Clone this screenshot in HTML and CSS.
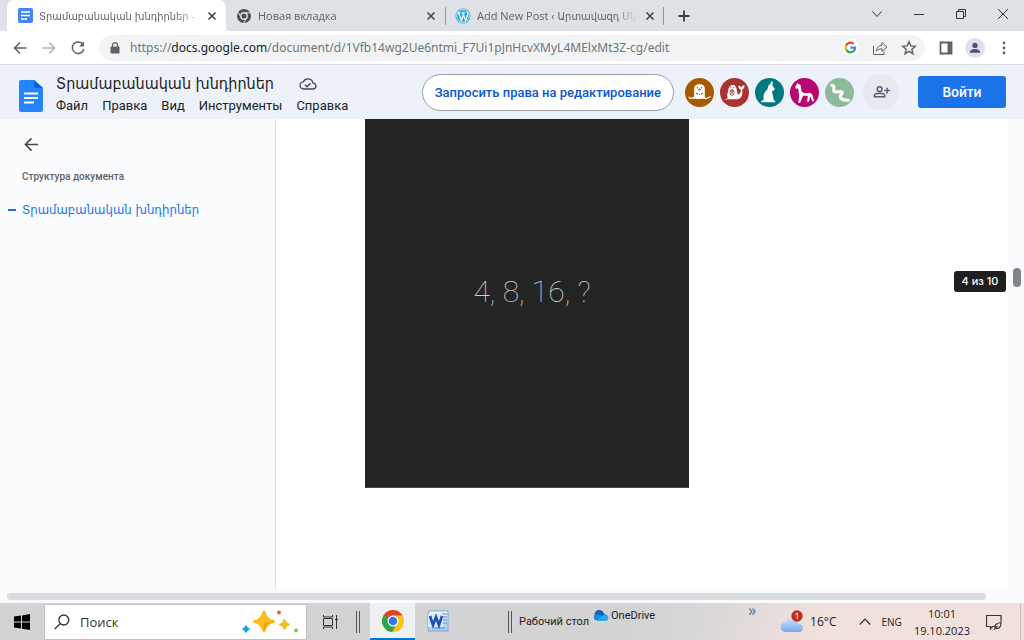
FILE: index.html
```html
<!DOCTYPE html>
<html lang="ru">
<head>
<meta charset="utf-8">
<meta name="viewport" content="width=device-width, initial-scale=1">
<title>Տրամաբանական խնդիրներ</title>
<link rel="stylesheet" href="styles.css">
</head>
<body>
<div class="screen">
  <div class="tabstrip">
    <div class="tab tab-active">
      <svg class="tab-icon" viewBox="0 0 16 16"><rect x="1" width="15" height="15" rx="2" fill="#4285f4"/><path d="M4 4h9M4 7.500h9M4 11h6" stroke="#fff" stroke-width="1.600"/></svg>
      <span class="tab-title">Տրամաբանական խնդիրներ -</span>
      <button class="tab-close" aria-label="Закрыть вкладку"><svg viewBox="0 0 10 10"><path d="M1.500 1.500l7 7M8.500 1.500l-7 7"/></svg></button>
    </div>
    <div class="tab">
      <svg class="tab-icon" viewBox="0 0 16 16"><circle cx="8" cy="8" r="7" fill="#4b4e52"/><circle cx="8" cy="8" r="3.200" fill="#4b4e52" stroke="#dee1e6" stroke-width="1.400"/><path d="M8 4.800h6.500M5.200 9.600L2 4.100M10.800 9.600L7.700 15" stroke="#dee1e6" stroke-width="1"/></svg>
      <span class="tab-title">Новая вкладка</span>
      <button class="tab-close" aria-label="Закрыть вкладку"><svg viewBox="0 0 10 10"><path d="M1.500 1.500l7 7M8.500 1.500l-7 7"/></svg></button>
    </div>
    <div class="tab tab-divided">
      <svg class="tab-icon" viewBox="0 0 16 16"><circle cx="8" cy="8" r="7.500" fill="#21a5dc"/><circle cx="8" cy="8" r="6.300" fill="none" stroke="#fff" stroke-width=".8"/><path d="M2.500 4.800h3M6.800 4.800h3.400M3.700 5l2.700 7.600L8.400 7M7.900 5l2.700 7.600L12.800 6c.3-1-.9-1.500-.6-2.700" fill="none" stroke="#fff" stroke-width="1.300"/></svg>
      <span class="tab-title">Add New Post ‹ Արտավազդ Մկր</span>
      <button class="tab-close" aria-label="Закрыть вкладку"><svg viewBox="0 0 10 10"><path d="M1.500 1.500l7 7M8.500 1.500l-7 7"/></svg></button>
    </div>
    <button class="new-tab" aria-label="Новая вкладка"><svg viewBox="0 0 12 12"><path d="M6 .5v11M.5 6h11"/></svg></button>
    <div class="window-controls">
      <button aria-label="Поиск вкладок"><svg viewBox="0 0 12 12"><path d="M1.500 3.500L6 8.500l4.500-5"/></svg></button>
      <button aria-label="Свернуть"><svg viewBox="0 0 12 12"><path d="M1 6.500h10"/></svg></button>
      <button aria-label="Восстановить"><svg viewBox="0 0 12 12"><path d="M1.500 3.500h7v7h-7zM3.500 3.500v-2h7v7h-2"/></svg></button>
      <button aria-label="Закрыть"><svg viewBox="0 0 12 12"><path d="M1 1l10 10M11 1L1 11"/></svg></button>
    </div>
  </div>

  <div class="toolbar">
    <div class="nav-buttons">
      <button aria-label="Назад"><svg viewBox="0 0 16 16"><path d="M14.500 8H2.500M8 2.500L2.500 8 8 13.500"/></svg></button>
      <button class="is-disabled" aria-label="Вперёд"><svg viewBox="0 0 16 16"><path d="M1.500 8h12M8 2.500L13.500 8 8 13.500"/></svg></button>
      <button aria-label="Обновить"><svg viewBox="0 0 16 16"><path d="M13 4.500a5.800 5.800 0 1 0 .8 4.500"/><path d="M14 1.500v5H9z" class="solid"/></svg></button>
    </div>
    <div class="omnibox">
      <svg class="lock" viewBox="0 0 10 12"><path d="M1 5h8v6H1z" fill="#5f6368" stroke="#5f6368"/><path d="M2.500 5V3.200a2.500 2.500 0 0 1 5 0V5" fill="none" stroke="#5f6368" stroke-width="1.300"/></svg>
      <a class="url" href="#">https://<span class="url-host">docs.google.com</span>/document/d/1Vfb14wg2Ue6ntmi_F7Ui1pJnHcvXMyL4MElxMt3Z-cg/edit</a>
      <button class="google-badge" aria-label="Google"><svg viewBox="0 0 48 48"><path fill="#4285f4" d="M45 24.500c0-1.600-.1-2.800-.4-4H24v7.700h12c-.3 2-1.600 5-4.500 7l6.900 5.400c4.200-3.800 6.600-9.500 6.600-16.100z"/><path fill="#34a853" d="M24 46c5.900 0 10.900-2 14.500-5.300l-6.900-5.400c-1.900 1.300-4.400 2.200-7.600 2.200-5.800 0-10.700-3.800-12.500-9.100l-7.100 5.500C8 41 15.400 46 24 46z"/><path fill="#fbbc05" d="M11.500 28.400a13.500 13.500 0 0 1 0-8.700l-7.100-5.600a22 22 0 0 0 0 19.800z"/><path fill="#ea4335" d="M24 10.600c4.100 0 6.900 1.800 8.500 3.300l6.100-6C34.900 4.300 29.900 2 24 2 15.400 2 8 7 4.400 14.100l7.100 5.600c1.800-5.300 6.700-9.100 12.500-9.100z"/></svg></button>
      <button aria-label="Поделиться"><svg class="thin" viewBox="0 0 16 16"><path d="M1.500 6v8.500h10.500v-3M4.500 11c.3-3.700 2.200-5.500 5.500-5.600V2.500L15 7l-5 4.500V8.800C7.800 8.800 6 9.300 4.500 11z"/></svg></button>
      <button aria-label="Добавить закладку"><svg viewBox="0 0 16 16"><path d="M8 1.800l1.800 4.100 4.500.4-3.400 3 1 4.400L8 11.400l-3.900 2.300 1-4.400-3.400-3 4.500-.4z"/></svg></button>
    </div>
    <div class="toolbar-actions">
      <button aria-label="Боковая панель"><svg viewBox="0 0 16 16"><path d="M2.500 2.500h11v11h-11z" stroke-width="1.800"/><path class="solid" d="M9.500 2h4v12h-4z"/></svg></button>
      <button class="profile" aria-label="Профиль"><svg viewBox="0 0 16 16"><circle class="solid" cx="8" cy="5" r="3"/><path class="solid" d="M2 13.500c0-3 2.500-4.300 6-4.300s6 1.300 6 4.300z"/></svg></button>
      <button aria-label="Меню"><svg viewBox="0 0 16 16"><circle class="solid" cx="8" cy="3" r="1.400"/><circle class="solid" cx="8" cy="8" r="1.400"/><circle class="solid" cx="8" cy="13" r="1.400"/></svg></button>
    </div>
  </div>

  <header class="docs-header">
    <svg class="docs-logo" viewBox="0 0 24 32"><path fill="#2684fc" d="M2 0h13l9 8v22a2 2 0 0 1-2 2H2a2 2 0 0 1-2-2V2a2 2 0 0 1 2-2z"/><path fill="#0066da" d="M15 0l9 8h-7a2 2 0 0 1-2-2z"/><path d="M5 13.500h14M5 18h14M5 22.500h10" stroke="#fff" stroke-width="1.900"/></svg>
    <div class="docs-heading">
      <div class="title-row">
        <h1>Տրամաբանական խնդիրներ</h1>
        <svg class="cloud" viewBox="0 0 18 14"><path d="M4.800 12a3.600 3.600 0 0 1-.4-7.200 5 5 0 0 1 9.400 1A3.100 3.100 0 0 1 13.800 12z"/><path d="M6 7.800l2 2 3.500-3.600"/></svg>
      </div>
      <nav class="menu">
        <button>Файл</button><button>Правка</button><button>Вид</button><button>Инструменты</button><button>Справка</button>
      </nav>
    </div>
    <button class="request">Запросить права на редактирование</button>
    <div class="avatars">
      <svg viewBox="0 0 30 30"><circle cx="15" cy="15" r="15" fill="#a65b00"/><path fill="#fff" d="M9.500 20V11.500C9.500 8 11 6.500 15 6.500s5.500 1.500 5.500 5V20l2 1.500H7.500z"/><path d="M4 19.500q1.500 2.500 4 1t4 0 4 0 4 0 4 0 2-1" stroke="#fff" fill="none" stroke-width="1.300"/><g fill="#a65b00"><circle cx="13" cy="10" r=".8"/><circle cx="17" cy="10" r=".8"/><ellipse cx="15" cy="12" rx="1.500" ry="1"/><path d="M11.500 15l2 1v1.200l-2-.7zM18.500 15l-2 1v1.200l2-.7zM14.500 16.500h1v1h-1z"/></g></svg>
      <svg viewBox="0 0 30 30"><circle cx="15" cy="15" r="15" fill="#a93331"/><path fill="#fff" d="M8 21c-1-3-.4-5 .4-7 0-9 9-9 9-1l1 4c2.500 0 3.500-2 3-5-2-1-3-3-2-4 1 0 2 .5 3 2 0-2 2-3 3-2 0 2-1 3-2.500 4 1 6-1 10-5.500 10H8l-4 1z"/><ellipse cx="12.500" cy="15" rx="2" ry="3" fill="none" stroke="#a93331"/><path stroke="#a93331" stroke-width="1.200" d="M10.500 10h1M14 10h1M12.500 12v4"/></svg>
      <svg viewBox="0 0 30 30"><circle cx="15" cy="15" r="15" fill="#00797e"/><path fill="#fff" d="M18.500 3.500L18 8l2.500 3-1 2-2 .5.500 2.500 1.500 7 1.500 1v1H7l-1-1 3-1.500c-1-5 1-8 4-11l1-4 2-1.500 1-3.500.5 2z"/></svg>
      <svg viewBox="0 0 30 30"><circle cx="15" cy="15" r="15" fill="#b80672"/><path fill="#fff" d="M5.500 8.500L7.500 6V4.500L8.500 6l2.500 1.500 1 6.500 2.500 1.500h6.500l2 1.500 2 7h-2l-2-5-1.500 5.500h-2l1-6-4.500-.5-1.500 2.500-2 5h-2l1-7-1-8-2.500 1z"/></svg>
      <svg viewBox="0 0 30 30"><circle cx="15" cy="15" r="15" fill="#8cba9b"/><path fill="none" stroke="#fff" stroke-width="3.200" stroke-linecap="round" stroke-linejoin="round" d="M7 7.500c3 0 2 2 2 5 0 4 7 0 8.500 2s-3.500 4-1 6.500c1.500 2 5 2 8 2"/></svg>
    </div>
    <button class="add-person" aria-label="Добавить пользователя"><svg viewBox="0 0 18 14"><circle cx="7" cy="4" r="2.500"/><path d="M1.500 12v-1.300C1.500 9 4 8.300 7 8.300s5.500.7 5.500 2.400V12zM15 2.500v6M12 5.500h6"/></svg></button>
    <button class="sign-in">Войти</button>
  </header>

  <main class="workspace">
    <aside class="outline">
      <button class="outline-back" aria-label="Закрыть структуру"><svg viewBox="0 0 16 16"><path d="M15 8H1.500M8 1.500L1.500 8 8 14.500"/></svg></button>
      <h2>Структура документа</h2>
      <a class="outline-item" href="#puzzle"><span class="dash"></span>Տրամաբանական խնդիրներ</a>
    </aside>
    <section class="document">
      <div class="puzzle" id="puzzle">4, 8, 16, ?</div>
      <div class="page-tip">4 из 10</div>
    </section>
    <div class="v-scroll"><div class="v-thumb"></div></div>
  </main>
  <div class="h-scroll"><div class="h-thumb"></div></div>

  <footer class="taskbar">
    <button class="start" aria-label="Пуск"><svg viewBox="0 0 16 16"><path d="M0 2.500l7-1v6H0zM8 1.400L16 0v7.500H8zM0 8.500h7v6l-7-1zM8 8.500h8V16l-8-1.300z"/></svg></button>
    <label class="search">
      <svg class="loupe" viewBox="0 0 16 16"><circle cx="9.800" cy="6" r="5"/><path d="M6.200 9.600L.8 15"/></svg>
      <input type="text" placeholder="Поиск" aria-label="Поиск">
      <svg class="sparkles" viewBox="0 0 58 24"><path fill="#f9bd20" stroke="#f9bd20" stroke-linejoin="round" d="M23 2q2 8 9.500 9.500Q25 13 23 21q-2-8-9.500-9.500Q21 10 23 2z" stroke-width="3"/><path fill="#e9a315" d="M23 21q2-8 9.500-9.500L23 13z"/><path fill="#f9bd20" stroke="#f9bd20" stroke-linejoin="round" stroke-width="2" d="M43.500 10q1 4 4.500 4.500-3.500.5-4.500 4.500-1-4-4.500-4.500 3.500-.5 4.500-4.500z"/><path fill="#10a5e6" stroke="#10a5e6" stroke-linejoin="round" d="M5 15.500q1 2.500 3.500 3.500Q6 20 5 22.500 4 20 1.500 19 4 18 5 15.500z"/><circle cx="38" cy="2.500" r="1.900" fill="#f1592a"/><circle cx="55" cy="20.500" r="2" fill="#8bc53f"/></svg>
    </label>
    <button class="task-view" aria-label="Представление задач"><svg viewBox="0 0 16 16"><path d="M1.500 4.500h9v7h-9zM1.500 1v2h9V1M1.500 15v-2h9v2M14.500 1v14M13 5.500h3"/></svg></button>
    <span class="grip grip-apps"></span>
    <button class="app app-active" aria-label="Google Chrome"><svg viewBox="0 0 24 24"><circle cx="12" cy="12" r="11" fill="#fbc116"/><path fill="#db4437" d="M12 12L2.500 6.500A11 11 0 0 1 21.500 6.500H12z"/><path fill="#2ca44e" d="M12 12l-9.500-5.500A11 11 0 0 0 11 23l5-8.500z"/><circle cx="12" cy="12" r="5.500" fill="#fff"/><circle cx="12" cy="12" r="4.300" fill="#3478e5"/></svg></button>
    <button class="app" aria-label="Word"><svg viewBox="0 0 24 24"><defs><linearGradient id="word" x2="0" y2="1"><stop stop-color="#f6fbff"/><stop offset="1" stop-color="#a8c9f1"/></linearGradient></defs><path fill="url(#word)" stroke="#7da6db" d="M3 2h19v20H2V6z"/><path stroke="#5682c8" d="M16 5h5M16 8h5M16 11h5M16 14h5M8 19h11"/><path fill="#d9e9fb" d="M2 5h15v13H2z"/><path d="M4 7l3 9 3-8 3 8 3-9" fill="none" stroke="#1c50ac" stroke-width="2.600"/></svg></button>
    <span class="grip grip-desktop"></span>
    <span class="desktop-label">Рабочий стол</span>
    <a class="onedrive" href="#"><svg viewBox="0 0 16 11"><path fill="#0c62b9" d="M2 7A4.800 4.800 0 0 1 10.500 2.500L13 6z"/><path fill="#1689d9" d="M2.500 10A3.200 3.200 0 0 1 4 4l7 2.500L9 10z"/><path fill="#28a8ea" d="M3 11l8-6.500a3.400 3.400 0 0 1 2 6.500z"/></svg>OneDrive</a>
    <button class="more" aria-label="Показать ещё">»</button>
    <div class="tray">
      <button class="weather"><svg viewBox="0 0 24 24"><defs><linearGradient id="sky" x2="0" y2="1"><stop stop-color="#c6dfff"/><stop offset="1" stop-color="#79aaf0"/></linearGradient></defs><path fill="url(#sky)" d="M6 22a5 5 0 0 1-.5-10 7 7 0 0 1 13 2 4 4 0 0 1 .5 8z"/><circle cx="17" cy="6" r="5.700" fill="#c42b1c"/><path d="M15.500 4.500L17.300 3v6" fill="none" stroke="#fff"/></svg>16°C</button>
      <button class="tray-up" aria-label="Скрытые значки"><svg viewBox="0 0 12 12"><path d="M.8 8.500L6 3l5.200 5.500"/></svg></button>
      <button class="lang">ENG</button>
      <button class="clock"><span>10:01</span><span>19.10.2023</span></button>
      <button class="notify" aria-label="Уведомления"><svg viewBox="0 0 16 16"><path d="M8.500 12.500H6.500L4.500 15v-2.500h-4v-11h14.500v6M9 13c-.5-2 2-4 6-4.500 0 3.500-1.500 6-4 6-1.500 0-2-.5-2-1.500zM8 15.500l3.500-3.500"/></svg></button>
    </div>
  </footer>
</div>
</body>
</html>
```
FILE: styles.css
```css
* { box-sizing: border-box; }
body { margin: 0; font-family: "Open Sans", "DejaVu Sans Condensed", "DejaVu Sans", sans-serif; color: #202124; }
button { margin: 0; padding: 0; border: 0; background: none; font: inherit; color: inherit; display: flex; align-items: center; justify-content: center; flex: none; }
a { color: inherit; text-decoration: none; }
svg { display: block; flex: none; }
h1, h2 { margin: 0; font-weight: 400; }
.screen { height: 100vh; display: flex; flex-direction: column; overflow: hidden; }

.tabstrip { flex: none; height: 31px; display: flex; align-items: stretch; background: #dee1e6; padding-left: 7px; }
.tab { flex: 0 1 219px; min-width: 0; display: flex; align-items: center; padding: 0 8px 0 10px; gap: 6px; color: #5f6368; font-size: 11px; }
.tab-active { background: #fff; border-radius: 7px 7px 0 0; }
.tab-divided { position: relative; }
.tab-divided::before, .tab-divided::after { content: ""; position: absolute; width: 1px; height: 18px; top: 7px; background: #94979c; }
.tab-divided::before { left: 0; }
.tab-divided::after { right: 0; }
.tab-icon { width: 16px; height: 16px; }
.tab-title { flex: 1; min-width: 0; overflow: hidden; white-space: nowrap; -webkit-mask-image: linear-gradient(to left, transparent, #000 24px); mask-image: linear-gradient(to left, transparent, #000 24px); }
.tab-close { width: 12px; height: 20px; }
.tab-close svg { width: 10px; height: 10px; fill: none; stroke: #3c4043; stroke-width: 1.5; }
.new-tab { width: 40px; }
.new-tab svg { width: 12px; height: 12px; stroke: #3c4043; stroke-width: 1.8; }
.window-controls { margin-left: auto; display: flex; padding-bottom: 4px; }
.window-controls button { width: 42px; }
.window-controls svg { width: 12px; height: 12px; fill: none; stroke: #333; stroke-width: 1; }

.toolbar { flex: none; height: 34px; display: flex; align-items: center; background: #fff; border-bottom: 1px solid #d8dade; padding-left: 5px; }
.toolbar button svg { width: 16px; height: 16px; fill: none; stroke: #5f6368; stroke-width: 1.5; }
.toolbar button .thin { stroke-width: 1; }
.toolbar .solid { fill: #5f6368; stroke: none; }
.nav-buttons { display: flex; width: 94px; }
.nav-buttons button { width: 29px; height: 28px; }
.nav-buttons .is-disabled { opacity: .5; }
.omnibox { flex: 1; min-width: 0; height: 26px; display: flex; align-items: center; background: #f1f3f4; border-radius: 13px; padding: 0 2px 0 11px; }
.lock { width: 10px; height: 12px; margin-right: 10px; }
.url { flex: 1; min-width: 0; overflow: hidden; white-space: nowrap; font-family: "Noto Sans", sans-serif; font-size: 12px; color: #70757a; }
.url-host { color: #202124; }
.omnibox button { width: 29px; height: 26px; }
.toolbar .google-badge svg { width: 17px; height: 17px; padding: 2px; border-radius: 50%; background: #fff; stroke: none; }
.toolbar-actions { display: flex; align-items: center; padding: 0 6px; }
.toolbar-actions button { width: 29px; height: 26px; }
.toolbar-actions .profile svg { width: 20px; height: 20px; padding: 3px; border-radius: 50%; background: #dee1e6; }
.toolbar-actions .profile .solid { fill: #4a5670; }

.docs-header { flex: none; height: 54px; display: flex; align-items: center; background: #edf2fa; padding: 0 18px 0 19px; font-family: Roboto, "DejaVu Sans", sans-serif; }
.docs-logo { width: 24px; height: 32px; margin: 7px 13px 0 0; }
.docs-heading { flex: 1; min-width: 0; align-self: stretch; padding-top: 7px; }
.title-row { display: flex; align-items: center; gap: 25px; height: 24px; white-space: nowrap; }
h1 { font-family: "DejaVu Sans Condensed", "DejaVu Sans", sans-serif; font-size: 16px; line-height: 24px; }
.cloud { width: 18px; height: 14px; fill: none; stroke: #444746; stroke-width: 1.3; }
.menu { display: flex; gap: 14px; height: 20px; font-size: 13px; line-height: 20px; }
.request { height: 37px; padding: 0 12px; border: 1px solid #9a9fa6; border-radius: 19px; background: #fff; color: #0b57d0; font-size: 13px; font-weight: 500; }
.avatars { display: flex; gap: 6px; margin: 0 9px 0 11px; }
.avatars svg { width: 29px; height: 29px; }
.add-person { width: 36px; height: 36px; border-radius: 50%; background: #e6e9ee; }
.add-person svg { width: 17px; height: 14px; fill: none; stroke: #536079; stroke-width: 1.6; }
.sign-in { width: 88px; height: 32px; margin-left: 19px; border-radius: 3px; background: #1a73e8; color: #fff; font-family: Inter, sans-serif; font-size: 13px; font-weight: 600; }

.workspace { flex: 1; min-height: 0; display: flex; background: #fff; }
.outline { width: 276px; flex: none; background: #f9fbfd; border-right: 1px solid #dcdfe3; padding: 17px 8px; }
.outline-back { width: 16px; height: 16px; margin: 0 0 16px 15px; }
.outline-back svg { width: 15px; height: 15px; fill: none; stroke: #444746; stroke-width: 1.7; }
.outline h2 { padding-left: 14px; font: 500 10px/18px Roboto, sans-serif; color: #5f6368; }
.outline-item { display: flex; align-items: center; gap: 6px; margin-top: 14px; font: 13px/20px "DejaVu Sans Condensed", "DejaVu Sans", sans-serif; color: #1a73e8; white-space: nowrap; }
.dash { width: 8px; height: 2px; background: #1a73e8; }
.document { flex: 1; min-width: 0; position: relative; display: flex; align-items: flex-start; padding-left: 89px; }
.puzzle { width: 324px; height: 369px; display: flex; align-items: center; justify-content: center; padding: 0 0 22px 10px; background: #242424; color: #d0d0d0; font: 100 30px/40px Roboto, sans-serif; border-bottom: 1px solid #454545; }
.page-tip { position: absolute; right: 3px; top: 152px; width: 52px; border-radius: 3px; background: #1f1f1f; color: #fff; font: 500 11px/21px Inter, sans-serif; text-align: center; }
.v-scroll { width: 15px; flex: none; background: #f9fbfd; padding: 149px 4px 0; }
.v-thumb { width: 8px; height: 19px; border-radius: 4px; background: #80848b; }
.h-scroll { flex: none; height: 14px; background: #f9fbfd; padding: 4px 38px 0 7px; }
.h-thumb { height: 7px; border-radius: 4px; background: #dadce0; }

.taskbar { flex: none; height: 37px; display: flex; align-items: center; background: linear-gradient(100deg, #d3d3d4 0 60%, #d9d7d7 68%, #f0e1dc 80%, #f0e1dc); font-size: 12px; white-space: nowrap; }
.taskbar svg { fill: none; stroke: #333; }
.start { width: 44px; height: 36px; }
.taskbar .start svg { width: 16px; height: 16px; fill: #000; stroke: none; }
.search { flex: 0 1 263px; min-width: 0; height: 36px; display: flex; align-items: center; background: #fff; border: 1px solid #c2c2c2; padding: 0 7px 0 9px; }
.loupe { width: 16px; height: 16px; stroke-width: 1.3; }
.search input { flex: 1; min-width: 0; border: 0; padding: 0 0 0 10px; background: none; font: inherit; font-size: 13px; outline: none; }
.search input::placeholder { color: #333; opacity: 1; }
.sparkles { width: 58px; height: 24px; }
.taskbar .sparkles { stroke: none; }
.task-view { width: 45px; }
.task-view svg { width: 16px; height: 16px; }
.grip { width: 4px; height: 22px; border: solid #555; border-width: 0 1px; flex: none; }
.grip-apps { margin: 0 10px 0 4px; }
.app { width: 45px; height: 37px; border-bottom: 2px solid transparent; }
.app-active { background: #eef1f1; border-color: #0078d7; }
.app svg { width: 24px; height: 24px; stroke: none; }
.grip-desktop { margin: 0 7px 0 48px; }
.desktop-label, .onedrive { font-family: Roboto, sans-serif; font-size: 11px; }
.onedrive { display: flex; gap: 2px; margin: 0 0 12px 4px; line-height: 16px; }
.onedrive svg { width: 16px; height: 11px; margin-top: 2px; stroke: none; }
.more { margin-left: auto; padding: 0 24px 24px 0; color: #466a9c; font-size: 16px; line-height: 16px; }
.tray { display: flex; align-items: center; height: 37px; padding-right: 3px; flex: none; }
.tray::after { content: ""; align-self: stretch; border-right: 1px solid #d1bdb6; margin-left: 18px; }
.weather { gap: 6px; font-size: 12px; }
.weather svg { width: 24px; height: 24px; stroke: none; }
.tray-up { margin: 0 11px 0 22px; }
.tray-up svg { width: 12px; height: 12px; stroke-width: 1.2; }
.lang { font-size: 10px; }
.clock { flex-direction: column; margin: 0 16px 0 12px; font-size: 11px; line-height: 17px; }
.notify svg { width: 16px; height: 16px; stroke-width: 1.2; }
```
